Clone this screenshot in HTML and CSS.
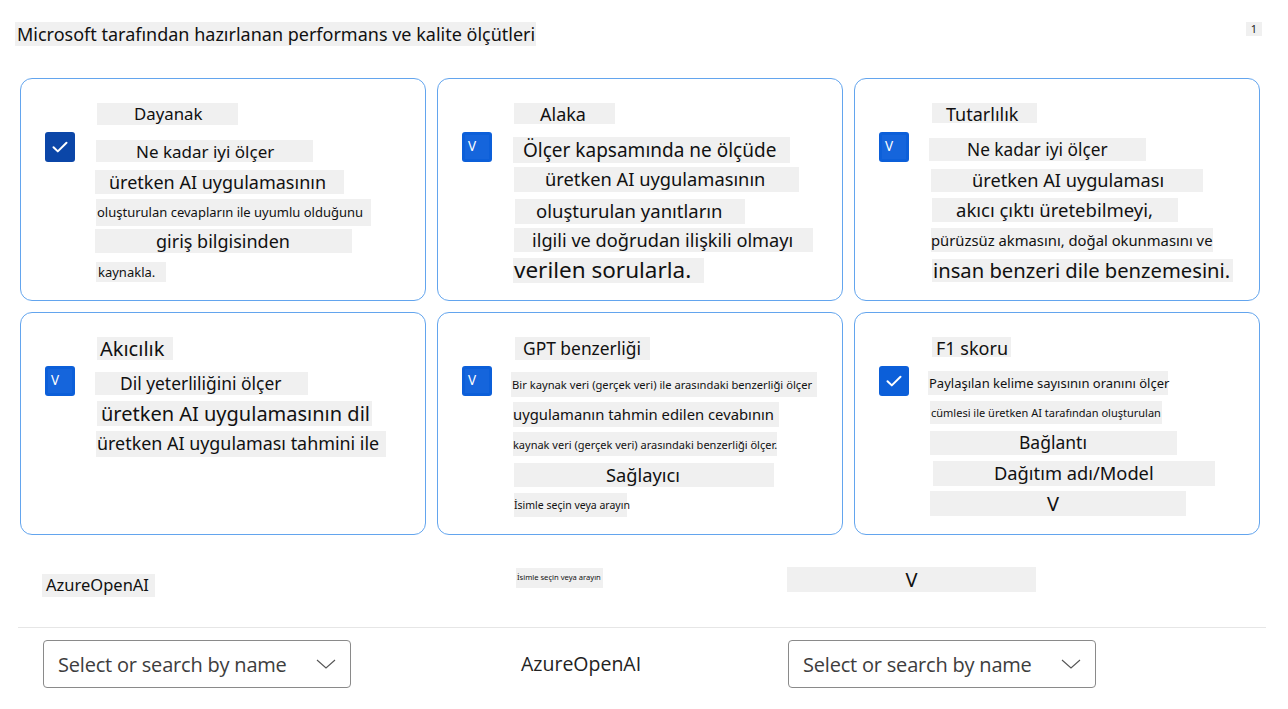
FILE: index.html
```html
<!DOCTYPE html>
<html lang="tr">
<head>
<meta charset="utf-8">
<title>Ölçütler</title>
<link rel="stylesheet" href="styles.css">
</head>
<body>
<div class="page">
  <div class="topbar">
    <div class="title">Microsoft tarafından hazırlanan performans ve kalite ölçütleri</div>
    <div class="badge">1</div>
  </div>

  <div class="grid">
    <div class="card k1">
      <div class="chk dark"><svg width="30" height="30" viewBox="0 0 30 30"><path d="M8.5 15.2l4.3 4.2 8.7-8.6" fill="none" stroke="#fff" stroke-width="2" stroke-linecap="round" stroke-linejoin="round"/></svg></div>
      <div class="lines">
        <div class="ln">Dayanak</div>
        <div class="ln">Ne kadar iyi ölçer</div>
        <div class="ln">üretken AI uygulamasının</div>
        <div class="ln">oluşturulan cevapların ile uyumlu olduğunu</div>
        <div class="ln">giriş bilgisinden</div>
        <div class="ln">kaynakla.</div>
      </div>
    </div>

    <div class="card k2">
      <div class="chk blue"><span class="inner"></span><span class="v">V</span></div>
      <div class="lines">
        <div class="ln">Alaka</div>
        <div class="ln">Ölçer kapsamında ne ölçüde</div>
        <div class="ln">üretken AI uygulamasının</div>
        <div class="ln">oluşturulan yanıtların</div>
        <div class="ln">ilgili ve doğrudan ilişkili olmayı</div>
        <div class="ln">verilen sorularla.</div>
      </div>
    </div>

    <div class="card k3">
      <div class="chk blue"><span class="inner"></span><span class="v">V</span></div>
      <div class="lines">
        <div class="ln">Tutarlılık</div>
        <div class="ln">Ne kadar iyi ölçer</div>
        <div class="ln">üretken AI uygulaması</div>
        <div class="ln">akıcı çıktı üretebilmeyi,</div>
        <div class="ln">pürüzsüz akmasını, doğal okunmasını ve</div>
        <div class="ln">insan benzeri dile benzemesini.</div>
      </div>
    </div>

    <div class="card k4">
      <div class="chk blue"><span class="inner"></span><span class="v">V</span></div>
      <div class="lines">
        <div class="ln">Akıcılık</div>
        <div class="ln">Dil yeterliliğini ölçer</div>
        <div class="ln">üretken AI uygulamasının dil</div>
        <div class="ln">üretken AI uygulaması tahmini ile</div>
      </div>
    </div>

    <div class="card k5">
      <div class="chk blue"><span class="inner"></span><span class="v">V</span></div>
      <div class="lines">
        <div class="ln">GPT benzerliği</div>
        <div class="ln">Bir kaynak veri (gerçek veri) ile arasındaki benzerliği ölçer</div>
        <div class="ln">uygulamanın tahmin edilen cevabının</div>
        <div class="ln">kaynak veri (gerçek veri) arasındaki benzerliği ölçer.</div>
        <div class="ln">Sağlayıcı</div>
        <div class="ln">İsimle seçin veya arayın</div>
      </div>
    </div>

    <div class="card k6">
      <div class="chk blue"><svg width="30" height="30" viewBox="0 0 30 30"><path d="M8.5 15.2l4.3 4.2 8.7-8.6" fill="none" stroke="#fff" stroke-width="2" stroke-linecap="round" stroke-linejoin="round"/></svg></div>
      <div class="lines">
        <div class="ln">F1 skoru</div>
        <div class="ln">Paylaşılan kelime sayısının oranını ölçer</div>
        <div class="ln">cümlesi ile üretken AI tarafından oluşturulan</div>
        <div class="ln">Bağlantı</div>
        <div class="ln">Dağıtım adı/Model</div>
        <div class="ln">V</div>
      </div>
    </div>
  </div>

  <div class="extras">
    <div class="ex ex-azure">AzureOpenAI</div>
    <div class="ex ex-search">İsimle seçin veya arayın</div>
    <div class="ex ex-v">V</div>
  </div>

  <div class="fields">
    <div class="select">
      <span class="placeholder">Select or search by name</span>
      <svg class="chev" width="20" height="10" viewBox="0 0 20 10"><path d="M1 1l9 8 9-8" fill="none" stroke="#555" stroke-width="1.1"/></svg>
    </div>
    <div class="provider">AzureOpenAI</div>
    <div class="select">
      <span class="placeholder">Select or search by name</span>
      <svg class="chev" width="20" height="10" viewBox="0 0 20 10"><path d="M1 1l9 8 9-8" fill="none" stroke="#555" stroke-width="1.1"/></svg>
    </div>
  </div>
</div>
</body>
</html>
```

FILE: styles.css
```css
html, body {
  margin: 0;
  padding: 0;
  background: #ffffff;
}
body {
  width: 1288px;
  height: 709px;
  overflow: hidden;
  font-family: "Noto Sans", "Open Sans", sans-serif;
  color: #111;
}
.page {
  padding-top: 22px;
}
.topbar {
  display: flex;
  justify-content: space-between;
  align-items: flex-start;
  height: 56px;
  padding: 0 26px 0 15px;
}
.title {
  font-size: 18px;
  line-height: 24px;
  background: #f0f0f0;
  padding: 0 1px 0 2px;
  color: #111;
}
.badge {
  font-size: 11px;
  line-height: 14px;
  background: #f0f0f0;
  padding: 0 5px;
  color: #222;
}

.grid {
  display: grid;
  grid-template-columns: repeat(3, 406px);
  grid-template-rows: 223px 223px;
  column-gap: 11px;
  row-gap: 11px;
  padding-left: 20px;
}
.card {
  box-sizing: border-box;
  border: 1px solid #63a5ee;
  border-radius: 12px;
  display: flex;
  align-items: flex-start;
  padding-top: 24px;
}
.chk {
  flex: none;
  position: relative;
  width: 30px;
  height: 30px;
  margin: 29px 19px 0 24px;
  border-radius: 3px;
}
.chk svg { display: block; }
.chk.dark { background: #0b46a8; }
.chk.blue { background: #0c5fd9; }
.chk .inner {
  position: absolute;
  left: 3px;
  top: 3px;
  width: 24px;
  height: 24px;
  background: #1565dc;
}
.chk .v {
  position: absolute;
  left: 6px;
  top: 6px;
  font-size: 13.5px;
  line-height: 17px;
  color: #fff;
}

.lines {
  display: flex;
  flex-direction: column;
  align-items: flex-start;
}
.ln {
  box-sizing: border-box;
  display: flex;
  align-items: center;
  background: #f0f0f0;
  white-space: nowrap;
  color: #111;
  line-height: 1;
}

/* card 1: Dayanak */
.k1 .ln:nth-child(1) { margin-left: 3px; width: 141px; height: 22px; padding-left: 37px; font-size: 16.8px; }
.k1 .ln:nth-child(2) { margin: 15px 0 0 2px; width: 217px; height: 22px; padding-left: 40px; font-size: 17px; }
.k1 .ln:nth-child(3) { margin: 8px 0 0 1px; width: 249px; height: 24px; padding-left: 14px; font-size: 18px; }
.k1 .ln:nth-child(4) { margin: 5px 0 0 2px; width: 275px; height: 27px; padding-left: 1px; font-size: 13px; }
.k1 .ln:nth-child(5) { margin: 3px 0 0 1px; width: 257px; height: 24px; padding-left: 61px; font-size: 18px; }
.k1 .ln:nth-child(6) { margin: 9px 0 0 2px; width: 70px; height: 20px; padding-left: 2px; font-size: 13px; }

/* card 2: Alaka */
.k2 .ln:nth-child(1) { margin-left: 3px; width: 101px; height: 21px; padding-left: 26px; font-size: 18px; }
.k2 .ln:nth-child(2) { margin: 13px 0 0 2px; width: 277px; height: 26px; padding-left: 10px; font-size: 19px; }
.k2 .ln:nth-child(3) { margin: 4px 0 0 3px; width: 285px; height: 25px; padding-left: 31px; font-size: 18.3px; }
.k2 .ln:nth-child(4) { margin: 7px 0 0 4px; width: 230px; height: 25px; padding-left: 21px; font-size: 18.5px; }
.k2 .ln:nth-child(5) { margin: 4px 0 0 3px; width: 299px; height: 24px; padding-left: 18px; font-size: 18.2px; }
.k2 .ln:nth-child(6) { margin: 6px 0 0 2px; width: 191px; height: 25px; padding-left: 1px; font-size: 22.5px; }

/* card 3: Tutarlılık */
.k3 .ln:nth-child(1) { margin-left: 4px; width: 105px; height: 20px; padding-left: 14px; font-size: 18px; align-items: flex-end; }
.k3 .ln:nth-child(2) { margin: 15px 0 0 1px; width: 217px; height: 23px; padding-left: 38px; font-size: 17.3px; }
.k3 .ln:nth-child(3) { margin: 8px 0 0 3px; width: 272px; height: 23px; padding-left: 41px; font-size: 18.2px; }
.k3 .ln:nth-child(4) { margin: 6px 0 0 4px; width: 246px; height: 24px; padding-left: 24px; font-size: 18.5px; }
.k3 .ln:nth-child(5) { margin: 6px 0 0 3px; width: 282px; height: 24px; padding-left: 0; font-size: 14.8px; }
.k3 .ln:nth-child(6) { margin: 7px 0 0 4px; width: 301px; height: 23px; padding-left: 1px; font-size: 20.2px; }

/* card 4: Akıcılık */
.k4 .ln:nth-child(1) { margin-left: 3px; width: 76px; height: 23px; padding-left: 3px; font-size: 20px; }
.k4 .ln:nth-child(2) { margin: 12px 0 0 1px; width: 213px; height: 23px; padding-left: 25px; font-size: 17.4px; }
.k4 .ln:nth-child(3) { margin: 6px 0 0 3px; width: 275px; height: 25px; padding-left: 4px; font-size: 20px; }
.k4 .ln:nth-child(4) { margin: 5px 0 0 2px; width: 290px; height: 26px; padding-left: 1px; font-size: 17.9px; }

/* card 5: GPT benzerliği */
.k5 .ln:nth-child(1) { margin-left: 4px; width: 135px; height: 23px; padding-left: 8px; font-size: 17.4px; }
.k5 .ln:nth-child(2) { margin: 12px 0 0 0; width: 306px; height: 25px; padding-left: 1px; font-size: 11.2px; }
.k5 .ln:nth-child(3) { margin: 5px 0 0 2px; width: 266px; height: 25px; padding-left: 0; font-size: 14.8px; }
.k5 .ln:nth-child(4) { margin: 5px 0 0 2px; width: 264px; height: 24px; padding-left: 0; font-size: 11px; }
.k5 .ln:nth-child(5) { margin: 7px 0 0 3px; width: 260px; height: 24px; padding-left: 92px; font-size: 18.3px; }
.k5 .ln:nth-child(6) { margin: 6px 0 0 3px; width: 113px; height: 24px; padding-left: 0; font-size: 10.5px; }

/* card 6: F1 skoru */
.k6 .ln:nth-child(1) { margin-left: 4px; width: 79px; height: 20px; padding-left: 4px; font-size: 18px; align-items: flex-end; }
.k6 .ln:nth-child(2) { margin: 14px 0 0 0; width: 240px; height: 24px; padding-left: 1px; font-size: 13px; }
.k6 .ln:nth-child(3) { margin: 6px 0 0 2px; width: 232px; height: 23px; padding-left: 1px; font-size: 11px; }
.k6 .ln:nth-child(4) { margin: 7px 0 0 2px; width: 247px; height: 24px; padding-left: 89px; font-size: 17.5px; }
.k6 .ln:nth-child(5) { margin: 6px 0 0 5px; width: 282px; height: 25px; padding-left: 61px; font-size: 18.3px; }
.k6 .ln:nth-child(6) { margin: 5px 0 0 2px; width: 256px; height: 25px; padding-left: 117px; font-size: 20px; }

/* loose labels below the cards */
.extras {
  display: flex;
  align-items: flex-start;
  height: 92px;
  padding-left: 42px;
  box-sizing: border-box;
}
.ex {
  box-sizing: border-box;
  display: flex;
  align-items: center;
  background: #f0f0f0;
  white-space: nowrap;
  color: #111;
  line-height: 1;
}
.ex-azure {
  margin-top: 39px;
  width: 113px;
  height: 23px;
  padding-left: 4px;
  font-size: 16.5px;
}
.ex-search {
  margin: 33px 0 0 361px;
  width: 87px;
  height: 20px;
  padding-left: 1px;
  font-size: 7.6px;
}
.ex-v {
  margin: 32px 0 0 184px;
  width: 249px;
  height: 25px;
  justify-content: center;
  font-size: 20px;
}

.fields {
  margin: 0 22px 0 18px;
  border-top: 1px solid #e6e6e6;
  padding: 12px 0 0 25px;
  display: flex;
  align-items: center;
}
.select {
  box-sizing: border-box;
  width: 308px;
  height: 48px;
  border: 1px solid #8a8a8a;
  border-radius: 4px;
  display: flex;
  align-items: center;
  justify-content: space-between;
  padding: 0 14px 0 14px;
  font-family: "Open Sans", "Noto Sans", sans-serif;
}
.placeholder {
  font-size: 20px;
  color: #3d3d3d;
  letter-spacing: -0.2px;
}
.chev { display: block; }
.provider {
  font-family: "Open Sans", "Noto Sans", sans-serif;
  font-size: 19.5px;
  color: #222;
  width: 437px;
  padding-left: 170px;
  box-sizing: border-box;
  margin-top: -2px;
}
```
